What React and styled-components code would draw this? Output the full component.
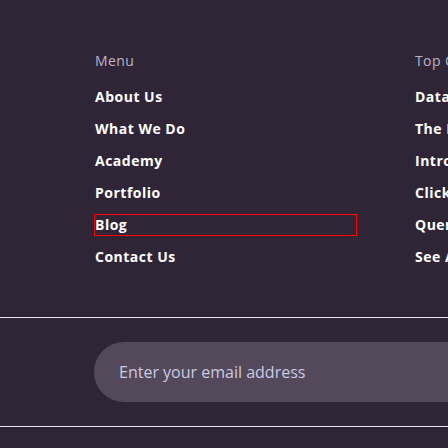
import React from "react";
import styled, { createGlobalStyle } from "styled-components";

const GlobalStyle = createGlobalStyle`
  html, body {
    margin: 0;
    padding: 0;
    background-color: #2f2537;
    overflow: hidden;
  }
  * {
    box-sizing: border-box;
  }
`;

const Footer = styled.footer`
  width: 448px;
  height: 448px;
  background-color: #2f2537;
  font-family: "Open Sans", "Noto Sans", sans-serif;
  overflow: hidden;
  padding-top: 51px;
`;

const Columns = styled.div`
  display: grid;
  grid-template-columns: 261px 260px;
  column-gap: 59px;
  padding-left: 95px;
`;

const Column = styled.div`
  display: flex;
  flex-direction: column;
`;

const ColumnTitle = styled.h4`
  margin: 0 0 16px;
  font-size: 14px;
  line-height: 20px;
  font-weight: 400;
  letter-spacing: 0.4px;
  color: #b9b4c7;
  white-space: nowrap;
`;

const LinkList = styled.ul`
  list-style: none;
  margin: 0;
  padding: 0;
  display: flex;
  flex-direction: column;
  gap: 12px;
`;

const Link = styled.a`
  display: block;
  font-size: 14px;
  line-height: 20px;
  font-weight: 700;
  letter-spacing: 0.5px;
  color: #ffffff;
  text-decoration: none;
  white-space: nowrap;
  outline: ${({ focused }) => (focused ? "1px solid #ff0000" : "none")};
`;

const Divider = styled.hr`
  margin: ${({ top }) => top}px 0 0;
  border: none;
  height: 1px;
  background-color: #e9e4ef;
`;

const Newsletter = styled.form`
  padding: 24px 0 0 94px;
`;

const EmailInput = styled.input`
  width: 420px;
  height: 60px;
  border: none;
  border-radius: 30px;
  background-color: #54495a;
  padding: 0 0 0 25px;
  font-family: "Open Sans", "Noto Sans", sans-serif;
  font-size: 16px;
  color: #ffffff;
  outline: none;
  &::placeholder {
    color: #cbc9e6;
  }
`;

const menuLinks = [
  "About Us",
  "What We Do",
  "Academy",
  "Portfolio",
  "Blog",
  "Contact Us",
];

const courseLinks = [
  "Data Science Bootcamp",
  "The Modern Web Stack",
  "Introduction to Python",
  "Clickhouse for Analysts",
  "Query Optimization",
  "See All",
];

export default function App() {
  return (
    <>
      <GlobalStyle />
      <Footer>
        <Columns>
          <Column>
            <ColumnTitle>Menu</ColumnTitle>
            <LinkList>
              {menuLinks.map((label) => (
                <li key={label}>
                  <Link href="#" focused={label === "Blog"}>
                    {label}
                  </Link>
                </li>
              ))}
            </LinkList>
          </Column>
          <Column>
            <ColumnTitle>Top Courses</ColumnTitle>
            <LinkList>
              {courseLinks.map((label) => (
                <li key={label}>
                  <Link href="#">{label}</Link>
                </li>
              ))}
            </LinkList>
          </Column>
        </Columns>
        <Divider top={50} />
        <Newsletter onSubmit={(e) => e.preventDefault()}>
          <EmailInput type="email" placeholder="Enter your email address" />
        </Newsletter>
        <Divider top={24} />
      </Footer>
    </>
  );
}
